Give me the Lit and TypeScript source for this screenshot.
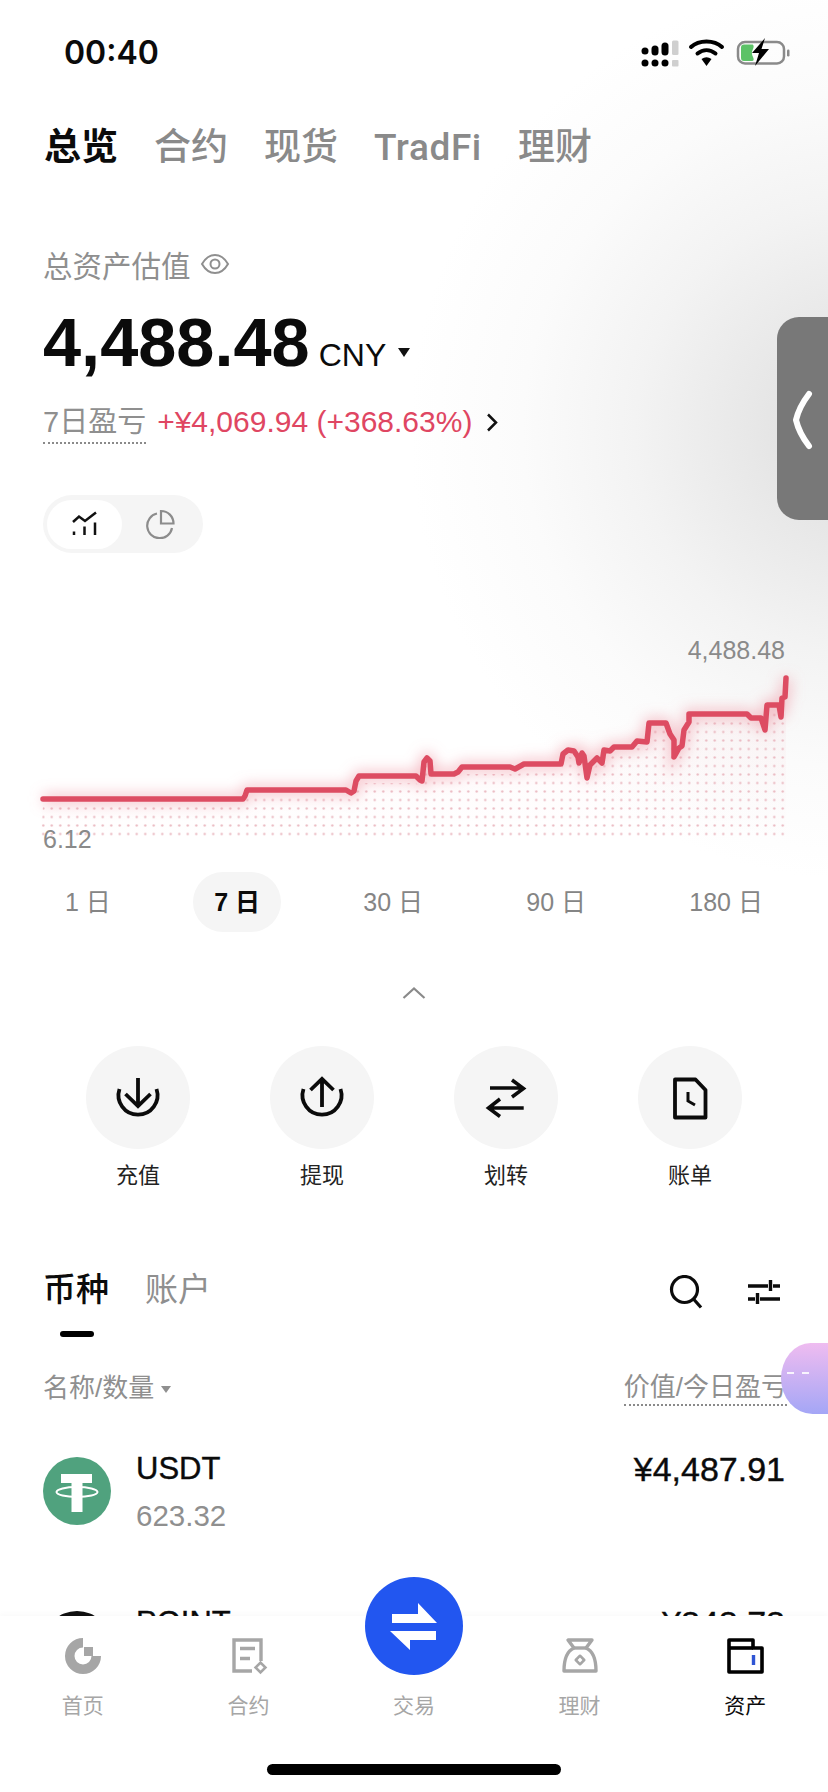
import { LitElement, html, css } from "lit";
import { customElement } from "lit/decorators.js";

const LINE: [number, number][] = [
  [43,799],[243,799],[245,796],[247,790],[346,790],[351,793],[354,791],[356,781],[359,776],[416,776],[420,780],[422,781],[424,762],[427,758],[430,761],[431,774],[454,774],[458,772],[462,767],[510,767],[515,769],[524,764],[561,764],[563,754],[568,750],[574,751],[578,757],[579,763],[582,753],[584,756],[587,778],[590,765],[597,758],[602,763],[604,750],[610,751],[614,747],[632,747],[637,741],[647,742],[649,723],[666,723],[670,734],[674,740],[674,757],[679,748],[682,746],[684,730],[689,722],[689,714],[747,714],[751,718],[761,718],[765,730],[767,705],[779,705],[781,717],[782,698],[785,697],[786,678],
];
const LINE_D = "M" + LINE.map((p) => p.join(" ")).join("L");
const AREA_D = "M" + LINE.map((p) => `${p[0]} ${p[1] + 7}`).join("L") + "L786 836L41 836Z";
const TINT_D = "M" + LINE.map((p) => p.join(" ")).join("L") + "L786 836L41 836Z";

@customElement("app-root")
export class AppRoot extends LitElement {
  static styles = css`
    :host { display: block; }
    * { box-sizing: border-box; }
    .page {
      position: relative; width: 828px; height: 1792px; overflow: hidden;
      display: flex; flex-direction: column; color: #0b0b0b;
      font-family: "Liberation Sans", "Noto Sans CJK SC", sans-serif;
      background: radial-gradient(circle 450px at 860px 430px, #dcdcdc 0%, #e8e8e8 25%, #f3f3f3 50%, #fbfbfb 75%, #ffffff 100%), #fff;
    }
    .main { flex: 1; min-height: 0; overflow: hidden; }
    .status { height: 104px; padding: 2px 0 0 64px; display: flex; align-items: center; position: relative; }
    .time { font: 600 32px/1 "Inter", sans-serif; width: 576px; }
    .status-icons { display: flex; align-items: center; }
    .status-icons svg { display: block; }
    .tabs { margin-top: 22px; margin-left: 44px; height: 44px; display: flex; gap: 36px; font: 500 37px/44px "Roboto", "Noto Sans CJK SC", sans-serif; color: #8a8a8a; }
    .tabs .on { color: #0b0b0b; font-weight: 700; }
    .tabs .lat { letter-spacing: .6px; }
    .total { margin: 74px 0 0 43px; height: 40px; display: flex; align-items: center; gap: 9px; font-size: 29.500px; color: #8f8f8f; }
    .amount { margin: 19px 0 0 43px; height: 80px; display: flex; align-items: baseline; line-height: 80px; }
    .amount b { font-size: 68.500px; font-weight: 700; }
    .amount span { font-size: 32px; margin-left: 9px; }
    .tri { width: 0; height: 0; border-left: 6px solid transparent; border-right: 6px solid transparent; border-top: 9px solid #111; }
    .amount .tri { margin-left: 12px; align-self: center; margin-top: 18px; }
    .pnl { margin: 21px 0 0 43px; height: 40px; display: flex; align-items: flex-start; font-size: 30px; line-height: 36px; }
    .dotted { border-bottom: 2px dotted #8a8a8a; color: #8f8f8f; }
    .pnl .dotted { font-size: 29px; height: 40px; }
    .up { color: #df4662; margin-left: 11px; }
    .pnl svg { margin: 9px 0 0 14px; }
    .toggle { margin: 51px 0 0 43px; width: 160px; height: 58px; border-radius: 29px; background: #f5f5f5; position: relative; display: flex; align-items: center; padding-left: 4px; }
    .toggle .a { width: 75px; height: 49px; border-radius: 25px; background: #fff; display: flex; align-items: center; justify-content: center; }
    .toggle .b { width: 75px; display: flex; justify-content: center; }
    .chart { position: relative; margin-top: 77px; height: 230px; }
    .chart svg { display: block; position: absolute; inset: 0; }
    .val { position: absolute; font-size: 25px; line-height: 30px; color: #8a8a8a; letter-spacing: 0; }
    .val.hi { right: 43px; top: 5px; }
    .val.lo { left: 43px; top: 194px; }
    .ranges { margin: 12px 44px 0; height: 60px; display: flex; justify-content: space-between; font-size: 25px; color: #858585; }
    .ranges div { padding: 0 21px; line-height: 60px; border-radius: 30px; }
    .ranges .on { background: #f5f5f5; color: #0b0b0b; font-weight: 700; }
    .fold { margin-top: 55px; height: 11px; display: flex; justify-content: center; }
    .fold svg { display: block; }
    .actions { margin: 48px 0 0 46px; display: flex; }
    .act { width: 184px; display: flex; flex-direction: column; align-items: center; }
    .act .c { width: 104px; height: 103px; border-radius: 50%; background: #f5f5f5; }
    .act svg { display: block; }
    .act span { margin-top: 12px; font-size: 22px; line-height: 30px; color: #222; }
    .sec { margin: 77px 44px 0 43px; height: 44px; display: flex; align-items: center; font-size: 33px; line-height: 44px; }
    .sec .t2 { color: #8f8f8f; margin-left: 36px; }
    .sec .t1 { font-weight: 500; }
    .sec .tools { margin-left: auto; margin-top: 4px; margin-right: 3px; display: flex; align-items: center; gap: 44px; }
    .sec svg { display: block; }
    .bar { margin: 19px 0 0 60px; width: 34px; height: 6px; border-radius: 3px; background: #000; }
    .head { margin: 33px 41px 0 43px; height: 36px; display: flex; justify-content: space-between; font-size: 26px; line-height: 34px; color: #8f8f8f; }
    .head .l { display: flex; align-items: center; gap: 7px; height: 36px; }
    .head .tri { border-top-color: #8f8f8f; border-left-width: 5.500px; border-right-width: 5.500px; border-top-width: 7px; margin-top: 2px; }
    .row { margin: 0 43px; height: 154px; display: flex; }
    .rows { margin-top: 48px; }
    .coin { width: 68px; height: 68px; margin-top: 3px; display: block; }
    .names { margin-left: 25px; }
    .names .n { font-size: 31px; line-height: 30px; -webkit-text-stroke: .4px currentColor; }
    .names .q { font-size: 29.500px; line-height: 32px; margin-top: 16px; color: #8f8f8f; }
    .price { margin-left: auto; font-size: 34px; line-height: 30px; -webkit-text-stroke: .4px currentColor; }
    .tabbar { position: relative; height: 176px; background: #fff; box-shadow: 0 -3px 5px rgba(0,0,0,.02); }
    .navs { display: grid; grid-template-columns: repeat(5, 1fr); padding-top: 20px; }
    .nav { display: flex; flex-direction: column; align-items: center; color: #a6a6a6; font-size: 21px; }
    .nav .ic { width: 40px; height: 40px; display: block; }
    .nav span { margin-top: 15px; line-height: 30px; }
    .nav.on { color: #0b0b0b; }
    .fab { position: absolute; left: 365px; top: -39px; width: 98px; height: 98px; border-radius: 50%; background: #2256f0; }
    .fab svg { display: block; }
    .home { margin: 43px auto 0; width: 294px; height: 11px; border-radius: 6px; background: #000; }
    .side { position: absolute; left: 777px; top: 317px; width: 51px; height: 203px; border-radius: 22px 0 0 22px; background: #787878; }
    .side svg { display: block; }
    .bubble { position: absolute; left: 781px; top: 1343px; width: 47px; height: 71px; border-radius: 30px 0 0 32px / 36px 0 0 36px; background: linear-gradient(180deg, #efbcf0, #a4a6f6); }
    .bubble i { position: absolute; top: 29px; width: 7px; height: 2px; background: rgba(255,255,255,.85); }
    .bubble .d1 { left: 6px; }
    .bubble .d2 { left: 21px; }
  `;

  render() {
    return html`
      <div class="page">
        <div class="main">
          <div class="status">
            <div class="time">00:40</div>
            <div class="status-icons">
              <svg width="40" height="32" viewBox="0 0 40 32">
                <rect x="1.500" y="10.500" width="7" height="7" rx="3.500" fill="#000"/><rect x="11.500" y="8.500" width="7" height="10" rx="3.500" fill="#000"/><rect x="21.500" y="5.500" width="7" height="13" rx="3.500" fill="#000"/><rect x="32" y="3.500" width="6.500" height="14.500" rx="1.500" fill="#cfcfcf"/>
                <circle cx="5" cy="26" r="3.500" fill="#000"/><circle cx="15" cy="26" r="3.500" fill="#000"/><circle cx="25" cy="26" r="3.500" fill="#000"/><rect x="32" y="23" width="6.500" height="6.500" rx="1" fill="#cfcfcf"/>
              </svg>
              <svg style="margin-left:8px" width="38" height="32" viewBox="0 0 38 32" fill="none">
                <path d="M3 10C11 2.500 26 2.500 34 10" stroke="#000" stroke-width="4" stroke-linecap="round"/>
                <path d="M9.500 16.500C15 12 22 12 27.500 16.500" stroke="#000" stroke-width="4" stroke-linecap="round"/>
                <path d="M13.500 22L18.500 29L23.500 22Q18.500 18.500 13.500 22Z" fill="#000"/>
              </svg>
              <svg style="margin-left:9px" width="56" height="30" viewBox="0 0 56 30" fill="none">
                <rect x="3" y="4" width="46" height="21.500" rx="7" stroke="#8a8a8a" stroke-width="2.500"/>
                <path d="M9 6.500H17C19 6.500 19 9 18 11C16.500 14 16.500 16 18 19C19 21 19 23 17 23H9C7 23 6 22 6 20V9.500C6 7.500 7 6.500 9 6.500Z" fill="#5cc267"/>
                <path d="M30 0L17 15H24L20 28L34 11H26.500Z" fill="#000"/>
                <rect x="52" y="11.500" width="2.500" height="7" rx="1.200" fill="#8a8a8a"/>
              </svg>
            </div>
          </div>

          <div class="tabs"><div class="on">总览</div><div>合约</div><div>现货</div><div class="lat">TradFi</div><div>理财</div></div>

          <div class="total">总资产估值
            <svg width="30" height="24" viewBox="0 0 30 24" fill="none" stroke="#8f8f8f" stroke-width="2">
              <path d="M2 12C6 5 10 3 15 3S24 5 28 12C24 19 20 21 15 21S6 19 2 12Z"/><circle cx="15" cy="12" r="4.500"/>
            </svg>
          </div>

          <div class="amount"><b>4,488.48</b><span>CNY</span><div class="tri"></div></div>

          <div class="pnl"><div class="dotted">7日盈亏</div><div class="up">+¥4,069.94 (+368.63%)</div>
            <svg width="13" height="19" viewBox="0 0 13 19" fill="none" stroke="#111" stroke-width="2.500"><path d="M2 1.500L10 9.500L2 17.500"/></svg>
          </div>

          <div class="toggle">
            <div class="a">
              <svg width="28" height="26" viewBox="0 0 28 26" fill="none" stroke="#111" stroke-width="2.500">
                <path d="M2 11L8 5.500L14 10L25 1.500"/><path d="M3 24V20.500M13.500 24V15.500M24 24V11.500"/>
              </svg>
            </div>
            <div class="b">
              <svg width="30" height="30" viewBox="0 0 30 30" fill="none" stroke="#8c8c8c" stroke-width="2.200">
                <path d="M12 4.500A12.500 12.500 0 1 0 27 19"/><path d="M16 2V14.500H28.500C28.500 7.500 23 2 16 2Z"/>
              </svg>
            </div>
          </div>

          <div class="chart">
            <svg width="828" height="230" viewBox="0 630 828 230" fill="none">
              <defs>
                <pattern id="dots" patternUnits="userSpaceOnUse" x="39" y="829.750" width="8.500" height="8.500">
                  <circle cx="4.250" cy="4.250" r="1.150" fill="#eab9c1"/>
                </pattern>
                <linearGradient id="tint" x1="0" y1="680" x2="0" y2="840" gradientUnits="userSpaceOnUse">
                  <stop offset="0" stop-color="#e0405a" stop-opacity=".05"/>
                  <stop offset="1" stop-color="#e0405a" stop-opacity="0"/>
                </linearGradient>
                <filter id="glow" x="-5%" y="-30%" width="110%" height="160%"><feGaussianBlur stdDeviation="7"/></filter>
              </defs>
              <path d=${TINT_D} fill="url(#tint)"/>
              <path d=${AREA_D} fill="url(#dots)"/>
              <path d=${LINE_D} stroke="#ef8c9a" stroke-opacity=".55" stroke-width="10" filter="url(#glow)"/>
              <path d=${LINE_D} stroke="#dd4c62" stroke-width="5.500" stroke-linejoin="round" stroke-linecap="round"/>
            </svg>
            <div class="val hi">4,488.48</div>
            <div class="val lo">6.12</div>
          </div>

          <div class="ranges"><div>1 日</div><div class="on">7 日</div><div>30 日</div><div>90 日</div><div>180 日</div></div>

          <div class="fold"><svg width="24" height="12" viewBox="0 0 24 12" fill="none" stroke="#8a8a8a" stroke-width="2.200"><path d="M1.500 11L12 1.500L22.500 11"/></svg></div>

          <div class="actions">
            <div class="act"><div class="c"><svg width="104" height="104" viewBox="0 0 104 104" fill="none" stroke="#0b0b0b" stroke-width="3.800">
              <path d="M33.500 43A19.500 19.500 0 1 0 70.500 43"/><path d="M52 32V60M39.500 48L52 60L64.500 48"/></svg></div><span>充值</span></div>
            <div class="act"><div class="c"><svg width="104" height="104" viewBox="0 0 104 104" fill="none" stroke="#0b0b0b" stroke-width="3.800">
              <path d="M33.500 43A19.500 19.500 0 1 0 70.500 43"/><path d="M52 61V33M40.500 44L52 33L63.500 44"/></svg></div><span>提现</span></div>
            <div class="act"><div class="c"><svg width="104" height="104" viewBox="0 0 104 104" fill="none" stroke="#0b0b0b" stroke-width="3.500">
              <path d="M36 42H69M58 34L69.500 42.500L58 51"/><path d="M69.700 62H35M46 53L34.500 62L46 70.500"/></svg></div><span>划转</span></div>
            <div class="act"><div class="c"><svg width="104" height="104" viewBox="0 0 104 104" fill="none" stroke="#0b0b0b" stroke-width="3.800">
              <path d="M37 33.500H57.500L67.500 44V71.500H37Z" stroke-linejoin="round"/><path d="M50 46V55L57 59" stroke-width="3"/></svg></div><span>账单</span></div>
          </div>

          <div class="sec">
            <div class="t1">币种</div><div class="t2">账户</div>
            <div class="tools">
              <svg width="34" height="34" viewBox="0 0 34 34" fill="none" stroke="#0b0b0b" stroke-width="3.200">
                <circle cx="15.500" cy="14.500" r="13"/><path d="M24.500 24L32 32.500"/></svg>
              <svg width="34" height="28" viewBox="0 0 34 28" fill="none" stroke="#0b0b0b" stroke-width="3.400">
                <path d="M1 8H21M26 8H33M23.500 2V13"/><path d="M1 21H8M13 21H33M10.500 15V26"/></svg>
            </div>
          </div>
          <div class="bar"></div>

          <div class="head">
            <div class="l">名称/数量<div class="tri"></div></div>
            <div class="dotted">价值/今日盈亏</div>
          </div>

          <div class="rows">
            <div class="row">
              <svg class="coin" viewBox="0 0 68 68">
                <circle cx="34" cy="34" r="34" fill="#50a27e"/>
                <path d="M18 17H49V26H39.500V55H28.500V26H18Z" fill="#fff"/>
                <ellipse cx="34" cy="35" rx="20.500" ry="5" fill="none" stroke="#fff" stroke-width="2"/>
              </svg>
              <div class="names"><div class="n">USDT</div><div class="q">623.32</div></div>
              <div class="price">¥4,487.91</div>
            </div>
            <div class="row">
              <svg class="coin" viewBox="0 0 68 68"><circle cx="34" cy="34" r="34" fill="#111"/></svg>
              <div class="names"><div class="n">POINT</div></div>
              <div class="price">¥848.78</div>
            </div>
          </div>
        </div>

        <div class="tabbar">
          <div class="navs">
            <div class="nav"><svg class="ic" viewBox="0 0 40 40" fill="#a6a6a6">
              <path d="M20 2A18 18 0 1 0 38 20H28.500A8.500 8.500 0 1 1 20 11.500Z"/><rect x="21" y="11" width="9" height="9"/></svg><span>首页</span></div>
            <div class="nav"><svg class="ic" viewBox="0 0 40 40" fill="none" stroke="#a6a6a6" stroke-width="3.400">
              <path d="M33 25V4H6V35H24"/><path d="M12 12.500H27M12 22.500H22"/><rect x="29" y="28" width="7" height="7" transform="rotate(45 32.500 31.500)" stroke-width="2.600"/></svg><span>合约</span></div>
            <div class="nav"><div class="ic"></div><span>交易</span></div>
            <div class="nav"><svg class="ic" viewBox="0 0 40 40" fill="none" stroke="#a6a6a6" stroke-width="3.400" stroke-linejoin="round">
              <path d="M8 4H32L26 12C33 15 36 23 36 35H4C4 23 7 15 14 12Z"/><path d="M14 12H26"/><rect x="17" y="21" width="6" height="6" transform="rotate(45 20 24)" stroke-width="2.600"/></svg><span>理财</span></div>
            <div class="nav on"><svg class="ic" viewBox="0 0 40 40" fill="none" stroke="#000" stroke-width="3.600" stroke-linejoin="round">
              <path d="M4 36V4H28V12H37V36Z"/><path d="M4 12H28"/><path d="M28.500 19V29" stroke="#2f55d4" stroke-width="3.400"/></svg><span>资产</span></div>
          </div>
          <div class="fab"><svg width="98" height="98" viewBox="0 0 98 98" fill="#fff">
            <path d="M27 37H53V26L72 46H27Z"/><path d="M25 54H71V63H45V73Z"/></svg></div>
          <div class="home"></div>
        </div>

        <div class="side"><svg width="51" height="203" viewBox="0 0 51 203" fill="none" stroke="#fff" stroke-width="6" stroke-linecap="round" stroke-linejoin="round"><path d="M32 77Q22 90 19 103Q22 116 32 129"/></svg></div>
        <div class="bubble"><i class="d1"></i><i class="d2"></i></div>
      </div>
    `;
  }
}
